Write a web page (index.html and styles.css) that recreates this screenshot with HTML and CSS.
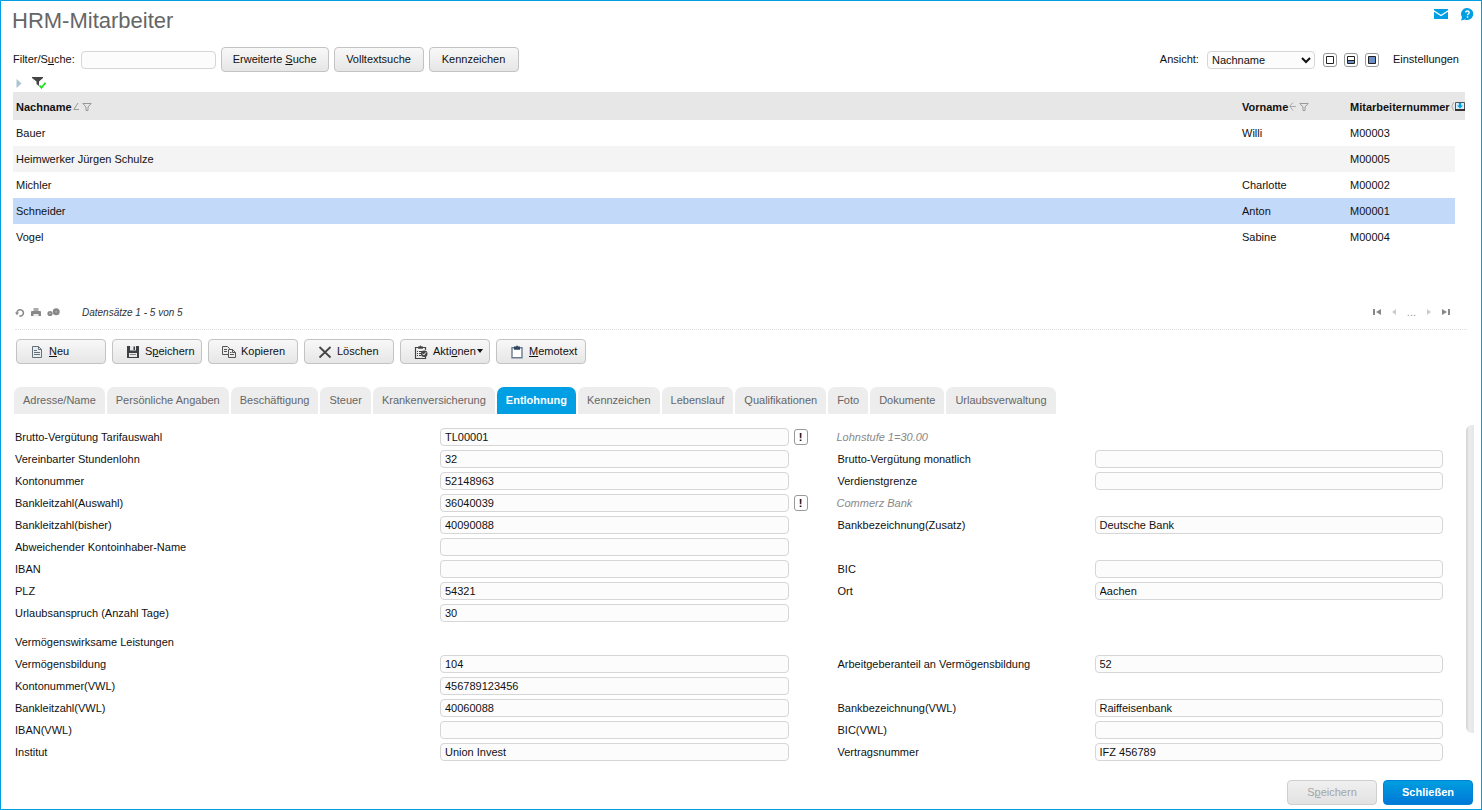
FILE: index.html
```html
<!DOCTYPE html>
<html lang="de">
<head>
  <meta charset="utf-8">
  <title>HRM-Mitarbeiter</title>
  <link rel="stylesheet" href="styles.css">
</head>
<body>
  <div class="window">
    <header class="header">
      <h1>HRM-Mitarbeiter</h1>
      <div class="header-icons">
        <a href="#" aria-label="Mail">
          <svg width="14" height="10" viewBox="0 0 14 10"><path fill="#009ee3" d="M0 0h14v1.200L7 5.800 0 1.200z M0 2.800l7 4.500 7-4.500V10H0z"/></svg>
        </a>
        <a href="#" aria-label="Hilfe">
          <svg width="14" height="13" viewBox="0 0 14 13"><path fill="#009ee3" d="M7.500 0a6 6 0 1 1-2.600 11.500L1 12.500 2 9.200A6 6 0 0 1 7.500 0z"/><path fill="none" stroke="#fff" stroke-width="1.400" d="M5.700 4.600c0-2.200 3.500-2 3.500 0C9.200 5.900 7.500 5.700 7.500 7.300M7.500 8.300v1.400"/></svg>
        </a>
      </div>
    </header>

    <div class="toolbar">
      <label for="filter">Filter/S<u>u</u>che:</label>
      <input type="text" id="filter" class="field filter">
      <button type="button" class="btn"><span>Erweiterte <u>S</u>uche</span></button>
      <button type="button" class="btn">Volltextsuche</button>
      <button type="button" class="btn">Kennzeichen</button>
      <div class="view">
        <label for="view">Ansicht:</label>
        <select id="view"><option>Nachname</option></select>
        <div class="view-modes">
          <button type="button" class="mini" aria-label="Liste">
            <svg width="8" height="8"><path fill="#fff" stroke="#222" d="M.5.5h7v7h-7z"/></svg>
          </button>
          <button type="button" class="mini" aria-label="Geteilt">
            <svg width="8" height="8"><path fill="#fff" stroke="#222" d="M.5.5h7v7h-7z"/><path fill="#6d8fc7" d="M1 4h6v3H1z"/><path stroke="#222" d="M1 4.500h6"/></svg>
          </button>
          <button type="button" class="mini" aria-label="Formular">
            <svg width="8" height="8"><path fill="#6d8fc7" stroke="#222" d="M.5.5h7v7h-7z"/></svg>
          </button>
        </div>
        <a href="#" class="settings">Einstellungen</a>
      </div>
    </div>

    <div class="filter-row">
      <svg width="6" height="9" viewBox="0 0 6 9"><path fill="#a9c4d2" d="M.5 0 5.500 4.500.5 9z"/></svg>
      <svg width="15" height="12" viewBox="0 0 15 12"><path fill="#444" d="M0 0h11v1L7 4.500V9L4.500 7V4.500L0 1z"/><path fill="none" stroke="#1be01b" stroke-width="1.800" d="M7.500 8.500l2 2.200 4-5"/></svg>
    </div>

    <table class="list">
      <colgroup>
        <col>
        <col class="col-name">
        <col class="col-number">
        <col class="col-config">
      </colgroup>
      <thead>
        <tr>
          <th>Nachname
            <svg width="6" height="9" viewBox="0 0 6 9"><path fill="none" stroke="#999" d="M5 1 .8 7.500H6"/></svg>
            <svg width="10" height="8" viewBox="0 0 10 8"><path fill="none" stroke="#999" d="M.8.500h8.400L6 4v3.500H4V4z"/></svg>
          </th>
          <th>Vorname
            <svg width="7" height="9" viewBox="0 0 7 9"><path fill="none" stroke="#aaa" d="M4 .5.800 4.200 4 8.500M1 4.500h6"/></svg>
            <svg width="10" height="8" viewBox="0 0 10 8"><path fill="none" stroke="#999" d="M.8.500h8.400L6 4v3.500H4V4z"/></svg>
          </th>
          <th>Mitarbeiternummer
            <svg width="3" height="9" viewBox="0 0 3 9"><path fill="none" stroke="#aaa" d="M2.500.5.8 4.200 2.500 8.500"/></svg>
          </th>
          <th class="config">
            <svg width="10" height="10" viewBox="0 0 10 10"><path fill="#dfeef6" stroke="#555" d="M.5.5h9v7h-9z"/><path fill="#009ee3" d="M3.800 1h2.400v2.500H8L5 6.500l-3-3h1.800z"/><path fill="#333" d="M0 7h10v2H0z"/></svg>
          </th>
        </tr>
      </thead>
      <tbody>
        <tr><td>Bauer</td><td>Willi</td><td>M00003</td></tr>
        <tr class="even"><td>Heimwerker Jürgen Schulze</td><td></td><td>M00005</td></tr>
        <tr><td>Michler</td><td>Charlotte</td><td>M00002</td></tr>
        <tr class="selected"><td>Schneider</td><td>Anton</td><td>M00001</td></tr>
        <tr><td>Vogel</td><td>Sabine</td><td>M00004</td></tr>
      </tbody>
    </table>

    <div class="pager">
      <div class="pager-tools">
        <svg width="10" height="9" viewBox="0 0 10 9"><path fill="none" stroke="#888" stroke-width="1.500" d="M2 5a3.200 3.200 0 1 1 2.200 2.900"/><path fill="#888" d="M0 4.500h4L2 7.200z"/></svg>
        <svg width="10" height="9" viewBox="0 0 10 9"><path fill="#aaa" d="M2.500 0h5v3h-5z"/><path fill="#888" d="M0 3.500Q0 3 1 3h8q1 0 1 1v4H0z"/><path fill="#eee" d="M2.500 6h5v2.500h-5z"/></svg>
        <svg width="13" height="9" viewBox="0 0 13 9"><circle cx="3" cy="5.500" r="2.600" fill="#888"/><circle cx="9.200" cy="3.700" r="3.500" fill="#888"/><circle cx="3" cy="5.500" r=".8" fill="#bbb"/><circle cx="9.200" cy="3.700" r="1" fill="#aaa"/></svg>
      </div>
      <span class="pager-info">Datensätze 1 - 5 von 5</span>
      <div class="pager-nav">
        <svg width="8" height="8" viewBox="0 0 8 8"><path fill="#888" d="M0 1h2v6H0z M8 1v6L3 4z"/></svg>
        <svg width="4" height="8" viewBox="0 0 4 8"><path fill="#ccc" d="M4 1v6L0 4z"/></svg>
        <span>...</span>
        <svg width="4" height="8" viewBox="0 0 4 8"><path fill="#ccc" d="M0 1v6l4-3z"/></svg>
        <svg width="8" height="8" viewBox="0 0 8 8"><path fill="#888" d="M6 1h2v6H6z M0 1v6l5-3z"/></svg>
      </div>
    </div>

    <div class="actions">
      <button type="button" class="btn">
        <svg width="14" height="14" viewBox="0 0 14 14"><path fill="#e8edf0" stroke="#65717a" d="M2.500 1.500h6l3 3v8h-9z"/><path fill="none" stroke="#65717a" d="M8.500 1.500v3h3M4 5.500h3M4 7.500h6M4 9.500h6"/></svg>
        <span><u>N</u>eu</span>
      </button>
      <button type="button" class="btn">
        <svg width="14" height="14" viewBox="0 0 14 14"><path fill="#3d4045" d="M1 1h12v12H1z"/><path fill="#e8e8e8" d="M4 1h6v4.500H4zM3 8h8v4H3z"/><path fill="#3d4045" d="M7.500 1.500H9V5H7.500z"/><path stroke="#888" d="M4 9.500h6"/></svg>
        <span>S<u>p</u>eichern</span>
      </button>
      <button type="button" class="btn">
        <svg width="14" height="14" viewBox="0 0 14 14"><path fill="#eee" stroke="#555" d="M.5 1.500h5l2 2v6h-7z"/><path stroke="#555" d="M2 4.500h3M2 6.500h3"/><path fill="#eee" stroke="#555" d="M6.500 4.500h4l3 3v5h-7z"/><path fill="none" stroke="#555" d="M10.500 4.500v3h3M8 7.500h1.500M8 9.500h4"/></svg>
        <span>Kopieren</span>
      </button>
      <button type="button" class="btn">
        <svg width="14" height="14" viewBox="0 0 14 14"><path fill="none" stroke="#444" stroke-width="1.800" d="M1.500 2 12.500 12.500M12.500 2 1.500 12.500"/></svg>
        <span>Löschen</span>
      </button>
      <button type="button" class="btn">
        <svg width="14" height="14" viewBox="0 0 14 14"><path fill="none" stroke="#444" stroke-width="1.200" d="M4 2.500H1.500v11h10V9M11.500 5V2.500H9"/><path fill="#444" d="M4 1.500h1.500Q6.500-.6 7.500 1.500H9v2.300H4z"/><path stroke="#444" d="M3 6.500h1M5 6.500h3M3 8.500h1M5 8.500h2M3 10.500h1M5 10.500h2"/><circle cx="10.200" cy="8.700" r="3.300" fill="#444"/><path fill="none" stroke="#fff" d="M8.500 8.700l1.300 1.400 2.200-2.800"/></svg>
        <span>Akti<u>o</u>nen<i class="caret"></i></span>
      </button>
      <button type="button" class="btn">
        <svg width="14" height="14" viewBox="0 0 14 14"><path fill="#fff" stroke="#6c7c90" stroke-width="1.400" d="M2 2.700h10v10H2z"/><path fill="#2f4560" d="M4 1.500h2Q7-.5 8 1.500h2v3.300H4z"/></svg>
        <span><u>M</u>emotext</span>
      </button>
    </div>

    <nav class="tabs">
      <a href="#">Adresse/Name</a>
      <a href="#">Persönliche Angaben</a>
      <a href="#">Beschäftigung</a>
      <a href="#">Steuer</a>
      <a href="#">Krankenversicherung</a>
      <a href="#" class="active">Entlohnung</a>
      <a href="#">Kennzeichen</a>
      <a href="#">Lebenslauf</a>
      <a href="#">Qualifikationen</a>
      <a href="#">Foto</a>
      <a href="#">Dokumente</a>
      <a href="#">Urlaubsverwaltung</a>
    </nav>

    <div class="panel">
      <form class="form">
        <label class="l1" for="tarif">Brutto-Vergütung Tarifauswahl</label>
        <input class="field f1" type="text" id="tarif" value="TL00001">
        <button type="button" class="pick">!</button>
        <span class="hint">Lohnstufe 1=30.00</span>

        <label class="l1" for="stundenlohn">Vereinbarter Stundenlohn</label>
        <input class="field f1" type="text" id="stundenlohn" value="32">
        <label class="l2" for="brutto">Brutto-Vergütung monatlich</label>
        <input class="field f2" type="text" id="brutto">

        <label class="l1" for="konto">Kontonummer</label>
        <input class="field f1" type="text" id="konto" value="52148963">
        <label class="l2" for="grenze">Verdienstgrenze</label>
        <input class="field f2" type="text" id="grenze">

        <label class="l1" for="blz">Bankleitzahl(Auswahl)</label>
        <input class="field f1" type="text" id="blz" value="36040039">
        <button type="button" class="pick">!</button>
        <span class="hint">Commerz Bank</span>

        <label class="l1" for="blz-alt">Bankleitzahl(bisher)</label>
        <input class="field f1" type="text" id="blz-alt" value="40090088">
        <label class="l2" for="bank">Bankbezeichnung(Zusatz)</label>
        <input class="field f2" type="text" id="bank" value="Deutsche Bank">

        <label class="l1" for="inhaber">Abweichender Kontoinhaber-Name</label>
        <input class="field f1" type="text" id="inhaber">

        <label class="l1" for="iban">IBAN</label>
        <input class="field f1" type="text" id="iban">
        <label class="l2" for="bic">BIC</label>
        <input class="field f2" type="text" id="bic">

        <label class="l1" for="plz">PLZ</label>
        <input class="field f1" type="text" id="plz" value="54321">
        <label class="l2" for="ort">Ort</label>
        <input class="field f2" type="text" id="ort" value="Aachen">

        <label class="l1" for="urlaub">Urlaubsanspruch (Anzahl Tage)</label>
        <input class="field f1" type="text" id="urlaub" value="30">

        <h2>Vermögenswirksame Leistungen</h2>

        <label class="l1" for="vb">Vermögensbildung</label>
        <input class="field f1" type="text" id="vb" value="104">
        <label class="l2" for="anteil">Arbeitgeberanteil an Vermögensbildung</label>
        <input class="field f2" type="text" id="anteil" value="52">

        <label class="l1" for="konto-vwl">Kontonummer(VWL)</label>
        <input class="field f1" type="text" id="konto-vwl" value="456789123456">

        <label class="l1" for="blz-vwl">Bankleitzahl(VWL)</label>
        <input class="field f1" type="text" id="blz-vwl" value="40060088">
        <label class="l2" for="bank-vwl">Bankbezeichnung(VWL)</label>
        <input class="field f2" type="text" id="bank-vwl" value="Raiffeisenbank">

        <label class="l1" for="iban-vwl">IBAN(VWL)</label>
        <input class="field f1" type="text" id="iban-vwl">
        <label class="l2" for="bic-vwl">BIC(VWL)</label>
        <input class="field f2" type="text" id="bic-vwl">

        <label class="l1" for="institut">Institut</label>
        <input class="field f1" type="text" id="institut" value="Union Invest">
        <label class="l2" for="vertrag">Vertragsnummer</label>
        <input class="field f2" type="text" id="vertrag" value="IFZ 456789">
      </form>
      <div class="scroll-thumb"></div>
    </div>

    <footer class="footer">
      <button type="button" class="btn" disabled><span>S<u>p</u>eichern</span></button>
      <button type="button" class="btn primary">Schließen</button>
    </footer>
  </div>
</body>
</html>
```

FILE: styles.css
```css
:root {
  --accent: #009ee3;
  --text: #111;
  --muted: #666;
  --field-border: #d6d6d6;
}

* {
  box-sizing: border-box;
}

body {
  margin: 0;
  background: #fff;
  color: var(--text);
  font-family: "Liberation Sans", Arial, sans-serif;
  font-size: 11px;
  line-height: 13px;
}

button, input, select {
  font: inherit;
  color: inherit;
  margin: 0;
}

a {
  color: inherit;
  text-decoration: none;
}

svg {
  display: block;
  flex: none;
}

.window {
  display: flex;
  flex-direction: column;
  min-height: 100vh;
  border: 1px solid var(--accent);
}

/* Header */
.header {
  display: flex;
  justify-content: space-between;
  padding: 7px 7px 13px 11px;
}

.header h1 {
  margin: 0;
  font-size: 22px;
  font-weight: 400;
  line-height: 26px;
  color: var(--muted);
}

.header-icons {
  display: flex;
  align-items: center;
  gap: 12px;
  height: 12px;
}

/* Buttons and fields */
.btn {
  display: flex;
  align-items: center;
  justify-content: center;
  gap: 5px;
  min-width: 90px;
  height: 25px;
  padding: 0 11px;
  border: 1px solid #c3c3c3;
  border-radius: 4px;
  background: linear-gradient(#f8f8f8, #e6e6e6);
  white-space: nowrap;
}

.btn:disabled {
  color: #a5a5a5;
  border-color: #cfcfcf;
  background: linear-gradient(#f0f0f0, #e2e2e2);
}

.btn.primary {
  border-color: #0083d6;
  background: linear-gradient(#009ee0, #0078d7);
  color: #fff;
  font-weight: 700;
}

.field {
  height: 18px;
  min-width: 0;
  padding: 0 4px;
  border: 1px solid var(--field-border);
  border-radius: 4px;
  background: #fcfcfc;
}

/* Toolbar */
.toolbar {
  display: flex;
  align-items: center;
  gap: 5px;
  padding: 0 22px 0 12px;
}

.filter {
  width: 135px;
  margin-left: 1px;
}

.view {
  display: flex;
  align-items: center;
  gap: 8px;
  margin-left: auto;
}

.view select {
  width: 108px;
  height: 18px;
  padding: 0;
  border: 1px solid var(--field-border);
  border-radius: 4px;
  background: #fcfcfc;
}

.view-modes {
  display: flex;
  gap: 7px;
  margin-right: 6px;
}

.mini {
  display: flex;
  align-items: center;
  justify-content: center;
  width: 14px;
  height: 14px;
  padding: 0;
  border: 1px solid #999;
  border-radius: 3px;
  background: #fff;
}

.filter-row {
  display: flex;
  align-items: center;
  gap: 10px;
  height: 20px;
  padding: 2px 15px 0;
}

/* Employee list */
.list {
  width: calc(100% - 28px);
  margin-left: 12px;
  border-collapse: collapse;
  table-layout: fixed;
}

.col-name, .col-number {
  width: 108px;
}

.col-config {
  width: 10px;
}

.list th {
  height: 28px;
  padding: 2px 0 0 3px;
  background: #e7e7e7;
  text-align: left;
  white-space: nowrap;
}

.list th svg {
  display: inline-block;
  margin-left: -2px;
}

.list th svg + svg {
  margin-left: 0;
}

.list th.config {
  padding-left: 0;
}

.list th.config svg {
  display: block;
  margin: 0;
}

.list td {
  height: 26px;
  padding: 0 3px;
}

.list .even td {
  background: #f4f4f4;
}

.list .selected td {
  background: #c3d9fa;
}

/* Pager */
.pager {
  display: flex;
  align-items: center;
  margin: 50px 14px 0;
  padding-bottom: 5px;
  border-bottom: 1px dotted #ddd;
}

.pager-tools {
  display: flex;
  align-items: center;
  gap: 6px;
  height: 24px;
}

.pager-info {
  margin-left: 22px;
  color: #333;
  font-size: 10px;
  font-style: italic;
}

.pager-nav {
  display: flex;
  align-items: center;
  gap: 11px;
  margin: 0 17px 0 auto;
  color: #999;
}

/* Record actions */
.actions {
  display: flex;
  gap: 6px;
  margin: 9px 15px 0;
}

.actions .btn {
  justify-content: flex-start;
  padding: 0 0 0 13px;
}

.caret {
  display: inline-block;
  margin: 0 0 2px 1px;
  border: 3px solid transparent;
  border-top: 4px solid #111;
  border-bottom: 0;
}

/* Tabs */
.tabs {
  display: flex;
  gap: 2px;
  margin: 23px 13px 0;
}

.tabs a {
  padding: 7px 9px;
  border-radius: 7px 7px 0 0;
  background: #ededed;
  color: var(--muted);
  white-space: nowrap;
}

.tabs a.active {
  background: var(--accent);
  color: #fff;
  font-weight: 700;
}

/* Detail form */
.panel {
  display: flex;
  justify-content: space-between;
  padding: 11px 7px 0 13px;
}

.form {
  display: grid;
  flex: 1;
  grid-template-columns: 426px minmax(0, 1fr) 48px 258px minmax(0, 1fr);
  row-gap: 4px;
  align-items: center;
  margin-right: 23px;
  padding-top: 3px;
}

.l1 { grid-column: 1; padding-left: 1px; }
.f1 { grid-column: 2; }
.l2 { grid-column: 4; padding-left: 1px; }
.f2 { grid-column: 5; }

.form h2 {
  grid-column: 1 / -1;
  margin: 8px 0 0 1px;
  font-size: 11px;
  font-weight: 400;
  line-height: 17px;
}

.pick {
  grid-column: 3;
  width: 14px;
  height: 16px;
  margin-left: 5px;
  padding: 0;
  border: 1px solid #999;
  border-radius: 3px;
  background: #fff;
  font-weight: 700;
}

.hint {
  grid-column: 4;
  color: #888;
  font-style: italic;
}

.scroll-thumb {
  width: 8px;
  margin-bottom: 28px;
  border-radius: 6px 0 0 6px;
  background: linear-gradient(90deg, #d2d2d2, #ececec 40%, #e6e6e6);
}

/* Footer */
.footer {
  display: flex;
  justify-content: flex-end;
  gap: 6px;
  margin-top: auto;
  padding: 16px 8px 4px;
}
```
